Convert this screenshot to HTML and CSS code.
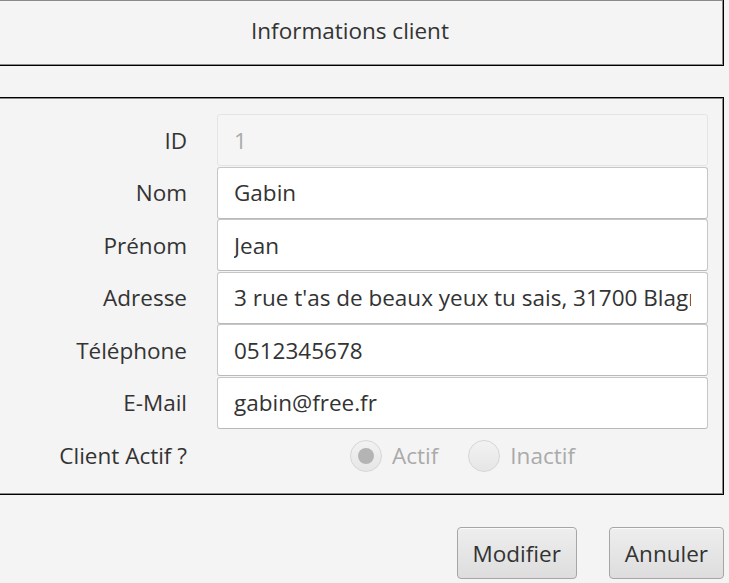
FILE: index.html
```html
<!DOCTYPE html>
<html lang="fr">
<head>
<meta charset="utf-8">
<title>Informations client</title>
<link rel="stylesheet" href="styles.css">
</head>
<body>
<header class="title-box">
  <span class="title">Informations client</span>
</header>
<section class="form-box">
  <div class="form-grid">
    <label class="lbl" for="f-id">ID</label>
    <input class="field disabled" id="f-id" value="1" disabled>
    <label class="lbl" for="f-nom">Nom</label>
    <input class="field" id="f-nom" value="Gabin">
    <label class="lbl" for="f-prenom">Prénom</label>
    <input class="field" id="f-prenom" value="Jean">
    <label class="lbl" for="f-adr">Adresse</label>
    <input class="field" id="f-adr" value="3 rue t'as de beaux yeux tu sais, 31700 Blagnac">
    <label class="lbl" for="f-tel">Téléphone</label>
    <input class="field" id="f-tel" value="0512345678">
    <label class="lbl" for="f-mail">E-Mail</label>
    <input class="field" id="f-mail" value="gabin@free.fr">
    <span class="lbl">Client Actif ?</span>
    <div class="radios">
      <span class="radio-item"><span class="radio checked"><span class="dot"></span></span><span class="radio-text">Actif</span></span>
      <span class="radio-item"><span class="radio"></span><span class="radio-text">Inactif</span></span>
    </div>
  </div>
</section>
<div class="actions">
  <button class="btn">Modifier</button>
  <button class="btn">Annuler</button>
</div>
</body>
</html>
```
FILE: styles.css
```css
html, body {
  margin: 0;
  padding: 0;
  background: #f4f4f4;
  font-family: "Open Sans", "Noto Sans", sans-serif;
  color: #333;
  overflow: hidden;
}
body {
  width: 729px;
  height: 583px;
}
.title-box {
  box-sizing: border-box;
  margin-left: -24px;
  width: 748px;
  height: 66px;
  border: 1px solid #000;
  border-top: none;
  box-shadow: inset 0 0 0 1px #8a8a8a;
  display: flex;
  align-items: center;
  justify-content: center;
  padding-bottom: 4px;
}
.title {
  font-size: 22.5px;
  color: #333;
}
.form-box {
  box-sizing: border-box;
  margin-top: 31px;
  margin-left: -24px;
  width: 748px;
  height: 398px;
  border: 1px solid #000;
  box-shadow: inset 0 0 0 1px #8a8a8a;
  padding: 16px 15px 0 0;
}
.form-grid {
  display: grid;
  grid-template-columns: 210px 1fr;
  column-gap: 30px;
  row-gap: 0.6px;
  grid-auto-rows: 52px;
  align-items: center;
}
.lbl {
  text-align: right;
  font-size: 22.5px;
  color: #333;
}
.field {
  box-sizing: border-box;
  height: 52px;
  width: 100%;
  margin: 0;
  border: 1px solid #c6c6c6;
  border-bottom-color: #b9b9b9;
  border-radius: 3px;
  background: #fff;
  padding: 0 16px;
  font-family: inherit;
  font-size: 22.5px;
  color: #333;
  outline: none;
}
.field.disabled {
  background: #f5f5f5;
  border-color: #e4e4e4;
  color: #aaa;
  -webkit-text-fill-color: #aaa;
  opacity: 1;
}
.radios {
  display: flex;
  justify-content: center;
  gap: 30px;
  align-items: center;
}
.radio-item {
  display: flex;
  align-items: center;
  gap: 10px;
}
.radio {
  box-sizing: border-box;
  width: 32px;
  height: 32px;
  border-radius: 50%;
  border: 1px solid #d6d6d6;
  background: linear-gradient(#f2f2f2, #e6e6e6);
  display: flex;
  align-items: center;
  justify-content: center;
}
.dot {
  width: 16px;
  height: 16px;
  border-radius: 50%;
  background: #b4b4b4;
}
.radio-text {
  font-size: 22.5px;
  color: #aaa;
}
.actions {
  display: flex;
  justify-content: flex-end;
  gap: 32px;
  margin-top: 32px;
  width: 724px;
}
.btn {
  box-sizing: border-box;
  height: 52px;
  padding: 0 15px;
  border: 1px solid #a6a6a6;
  border-radius: 4px;
  background: linear-gradient(#eeeeee, #dddddd);
  box-shadow: inset 0 1px 0 #fafafa;
  font-family: inherit;
  font-size: 22.5px;
  color: #333;
}
```
